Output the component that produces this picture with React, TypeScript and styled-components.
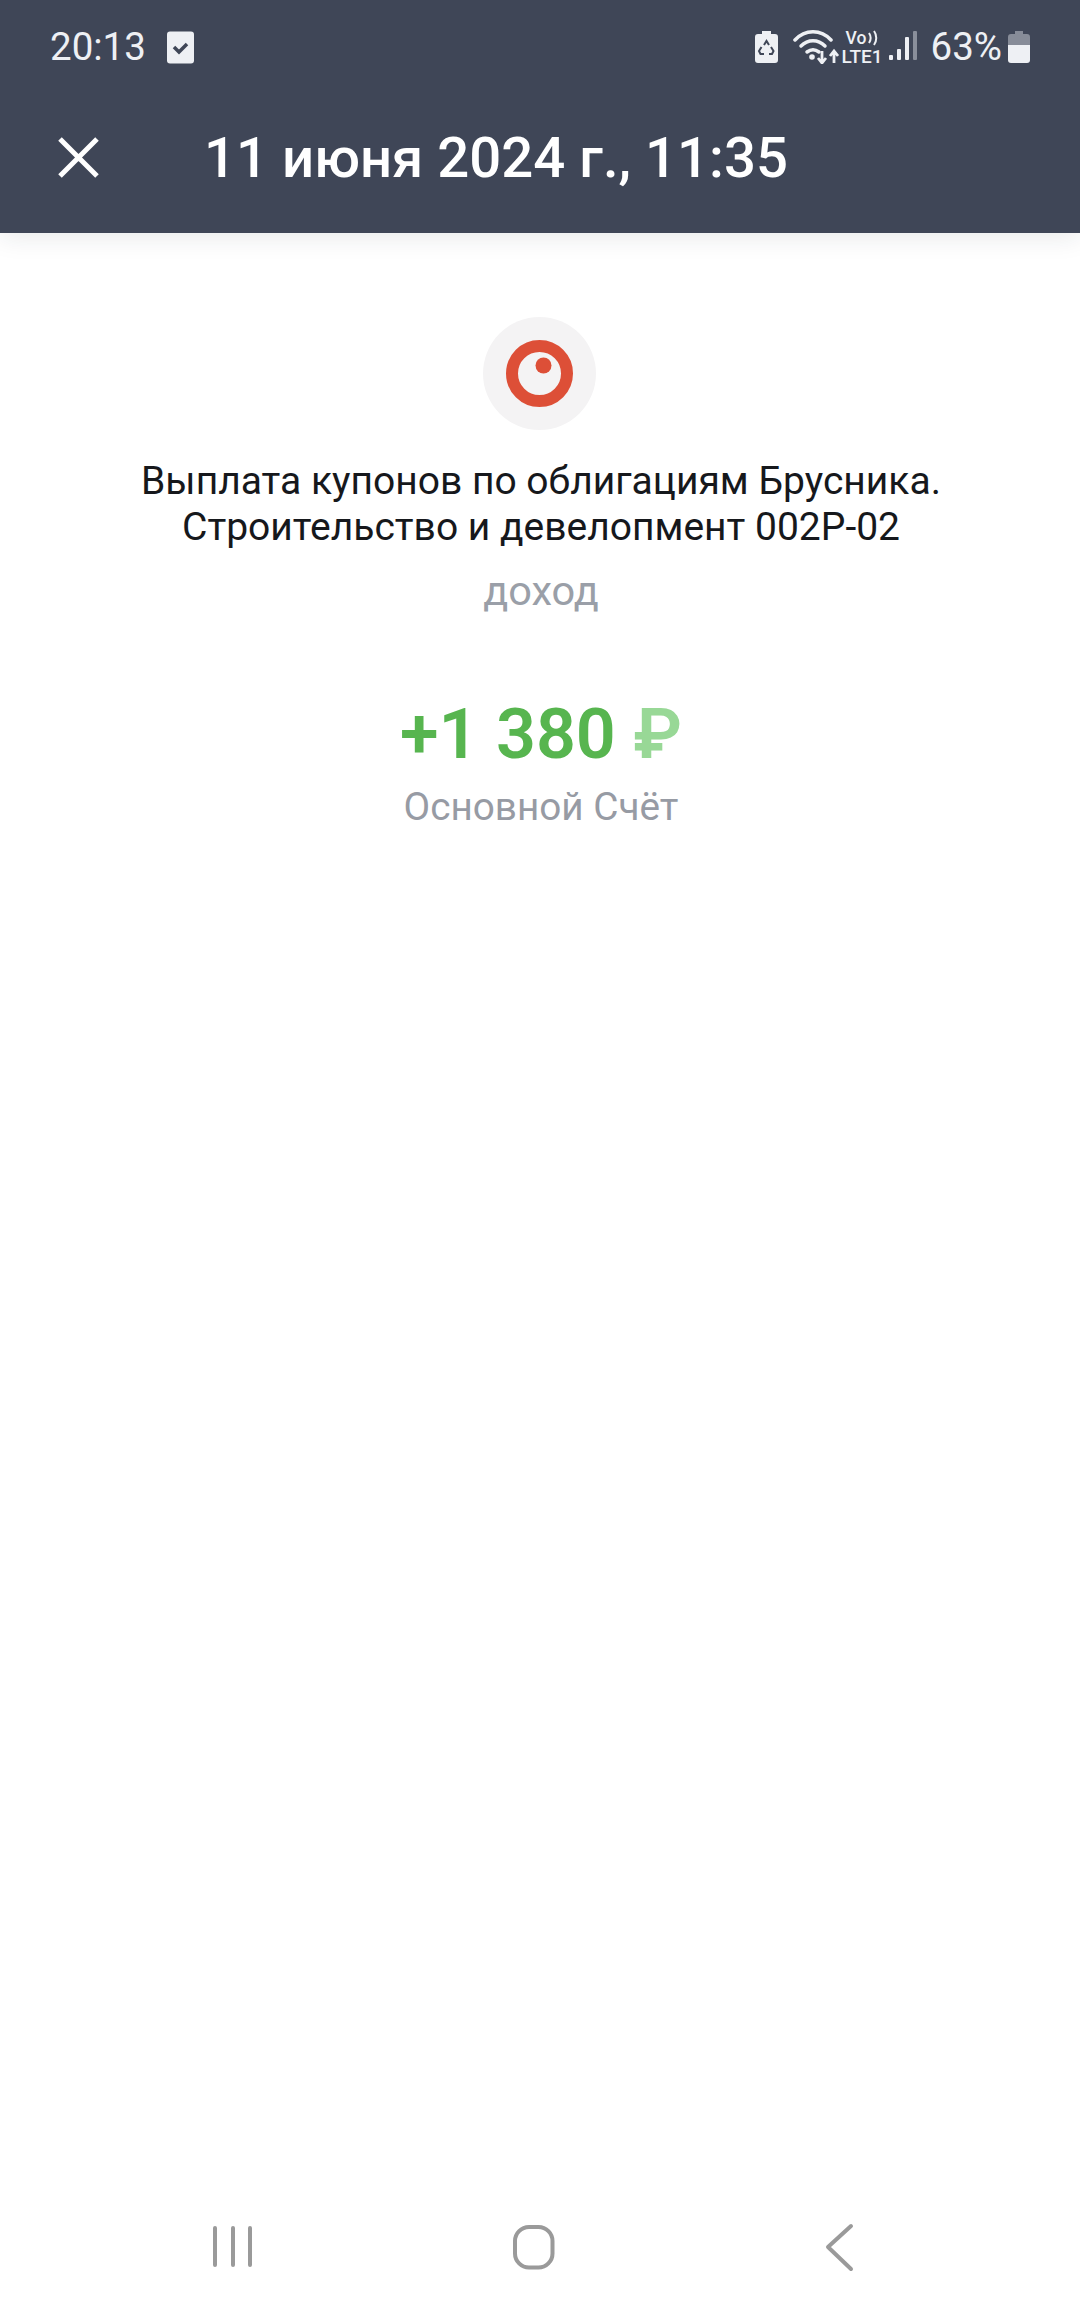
import React from 'react'
import styled, { createGlobalStyle } from 'styled-components'

const GlobalStyle = createGlobalStyle`
    html, body {
        margin: 0;
        padding: 0;
        background: #fff;
    }
    * {
        box-sizing: border-box;
    }
`

const Page = styled.div`
    width: 1080px;
    height: 2316px;
    display: flex;
    flex-direction: column;
    background: #fff;
    font-family: Roboto, 'Noto Sans', sans-serif;
    overflow: hidden;
`

const Header = styled.header`
    height: 233px;
    flex: none;
    background: #3f4657;
    color: #fff;
    box-shadow: 0 4px 24px rgba(30, 35, 50, 0.1);
`

const StatusBar = styled.div`
    height: 94px;
    padding: 0 50px 0 50px;
    display: flex;
    align-items: center;
    justify-content: space-between;
    color: #eef0f4;
`

const StatusGroup = styled.div`
    display: flex;
    align-items: center;
`

const StatusText = styled.span<{ $gap?: number }>`
    font-size: 38.5px;
    line-height: 44px;
    margin-right: ${({ $gap }) => $gap ?? 0}px;
`

const StatusIcon = styled.svg<{ $gap?: number }>`
    flex: none;
    margin-right: ${({ $gap }) => $gap ?? 0}px;
`

const VoLte = styled.div`
    width: 42px;
    margin-right: 5px;
    display: flex;
    flex-direction: column;
    font-weight: 500;
    color: #eef0f4;
`

const VoRow = styled.div`
    height: 17px;
    padding-left: 4px;
    display: flex;
    align-items: center;
    gap: 1px;
    font-size: 17.5px;
    line-height: 17px;
`

const LteRow = styled.div`
    margin-top: 1px;
    font-size: 19px;
    line-height: 17px;
`

const Toolbar = styled.div`
    height: 139px;
    padding: 0 0 12px 56px;
    display: flex;
    align-items: center;
`

const CloseIcon = styled.svg`
    width: 44px;
    height: 44px;
    margin-right: 104px;
`

const Title = styled.h1`
    margin: 0;
    font-size: 56.3px;
    line-height: 64px;
    font-weight: 500;
`

const Content = styled.main`
    flex: 1;
    padding: 84px 0 0 2px;
    display: flex;
    flex-direction: column;
    align-items: center;
`

const LogoCircle = styled.div`
    width: 113px;
    height: 113px;
    border-radius: 50%;
    background: #f4f3f4;
    display: flex;
    align-items: center;
    justify-content: center;
    margin-bottom: 28px;
    margin-right: 4px;
`

const Description = styled.div`
    font-size: 39px;
    line-height: 46px;
    color: #16181c;
    text-align: center;
    font-weight: 450;
`

const Kind = styled.div`
    margin-top: 18px;
    font-size: 41.5px;
    line-height: 46px;
    color: #9a9fa8;
`

const Amount = styled.div`
    margin-top: 78px;
    font-size: 70px;
    line-height: 84px;
    font-weight: 600;
    color: #57b54f;
`

const Currency = styled.span`
    color: #98d896;
`

const Account = styled.div`
    margin-top: 8px;
    font-size: 38.7px;
    line-height: 46px;
    color: #979ba4;
`

const NavBar = styled.nav`
    height: 138px;
    flex: none;
    padding: 0 91px 0 82px;
    display: grid;
    grid-template-columns: repeat(3, 1fr);
    align-items: center;
    justify-items: center;
`

const NavIcon = styled.svg`
    width: 64px;
    height: 64px;
    stroke: #9a9a9a;
    fill: none;
    stroke-width: 4;
    stroke-linecap: round;
    stroke-linejoin: round;
`

export default function App() {
    return (
        <Page>
            <GlobalStyle />
            <Header>
                <StatusBar>
                    <StatusGroup>
                        <StatusText $gap={21}>20:13</StatusText>
                        <StatusIcon width="27" height="33" viewBox="0 0 27 33">
                            <rect width="27" height="32" y="0.5" rx="3" fill="#eef0f4" />
                            <path d="M7 16l5 5 8-8" fill="none" stroke="#3f4657" strokeWidth="3.5" />
                        </StatusIcon>
                    </StatusGroup>
                    <StatusGroup>
                        <StatusIcon $gap={15} width="23" height="32" viewBox="0 0 23 32">
                            <path d="M7 0h9v3h4a3 3 0 0 1 3 3v23a3 3 0 0 1-3 3H3a3 3 0 0 1-3-3V6a3 3 0 0 1 3-3h4z" fill="#eef0f4" />
                            <path d="M9 14l2.500-4 2.500 4M16 16l2.500 4-1.500 3h-3M9 23H5.500L4 20l2.500-4" fill="none" stroke="#3f4657" strokeWidth="2" />
                        </StatusIcon>
                        <StatusIcon $gap={3} width="46" height="34" viewBox="0 0 46 34">
                            <g fill="none" stroke="#eef0f4" strokeWidth="3.5" strokeLinecap="round">
                                <path d="M2 10C12-1 28-1 38 10" />
                                <path d="M8 16c7-7 17-7 24 0" />
                                <path d="M14 22c4-3 8-3 12 0" />
                            </g>
                            <circle cx="19" cy="27" r="2.800" fill="#eef0f4" />
                            <path d="M29 21v12M25 28l4 5 4-5M41 33V21M37 26l4-5 4 5" fill="none" stroke="#eef0f4" strokeWidth="2.800" />
                        </StatusIcon>
                        <VoLte>
                            <VoRow>
                                Vo
                                <svg width="14" height="16" viewBox="0 0 14 16">
                                    <path d="M2 3c2 3 2 7 0 10M7 1c3 4 3 10 0 14" fill="none" stroke="#eef0f4" strokeWidth="2" />
                                </svg>
                            </VoRow>
                            <LteRow>LTE1</LteRow>
                        </VoLte>
                        <StatusIcon $gap={14} width="28" height="32" viewBox="0 0 28 32">
                            <rect x="0" y="24" width="4" height="5" rx="1" fill="#eef0f4" />
                            <rect x="8" y="18" width="4" height="11" rx="1" fill="#eef0f4" />
                            <rect x="16" y="6" width="4" height="23" rx="1" fill="#eef0f4" />
                            <rect x="24" y="0" width="4" height="29" rx="1" fill="#8a8f9b" />
                        </StatusIcon>
                        <StatusText $gap={6}>63%</StatusText>
                        <StatusIcon width="22" height="32" viewBox="0 0 22 32">
                            <path d="M7 0h8v3h4a3 3 0 0 1 3 3v8H0V6a3 3 0 0 1 3-3h4z" fill="#878c98" />
                            <path d="M0 14h22v15a3 3 0 0 1-3 3H3a3 3 0 0 1-3-3z" fill="#eef0f4" />
                        </StatusIcon>
                    </StatusGroup>
                </StatusBar>
                <Toolbar>
                    <CloseIcon viewBox="0 0 44 44">
                        <path d="M4 3l37 37M41 3L4 40" stroke="#fff" strokeWidth="5" fill="none" />
                    </CloseIcon>
                    <Title>11 июня 2024 г., 11:35</Title>
                </Toolbar>
            </Header>
            <Content>
                <LogoCircle>
                    <svg width="67" height="67" viewBox="0 0 67 67">
                        <circle cx="33.500" cy="33.500" r="27.500" fill="none" stroke="#dd4f37" strokeWidth="12" />
                        <circle cx="37.500" cy="25.500" r="8" fill="#dd4f37" />
                    </svg>
                </LogoCircle>
                <Description>
                    Выплата купонов по облигациям Брусника.
                    <br />
                    Строительство и девелопмент 002P-02
                </Description>
                <Kind>доход</Kind>
                <Amount>
                    +1 380 <Currency>₽</Currency>
                </Amount>
                <Account>Основной Счёт</Account>
            </Content>
            <NavBar>
                <NavIcon viewBox="0 0 64 64">
                    <path d="M14 13v37M32 13v37M49 13v37" />
                </NavIcon>
                <NavIcon viewBox="0 0 64 64">
                    <rect x="12" y="12" width="37.500" height="40.500" rx="14" />
                </NavIcon>
                <NavIcon viewBox="0 0 64 64">
                    <path d="M45 11L22 32l23 22" />
                </NavIcon>
            </NavBar>
        </Page>
    )
}
